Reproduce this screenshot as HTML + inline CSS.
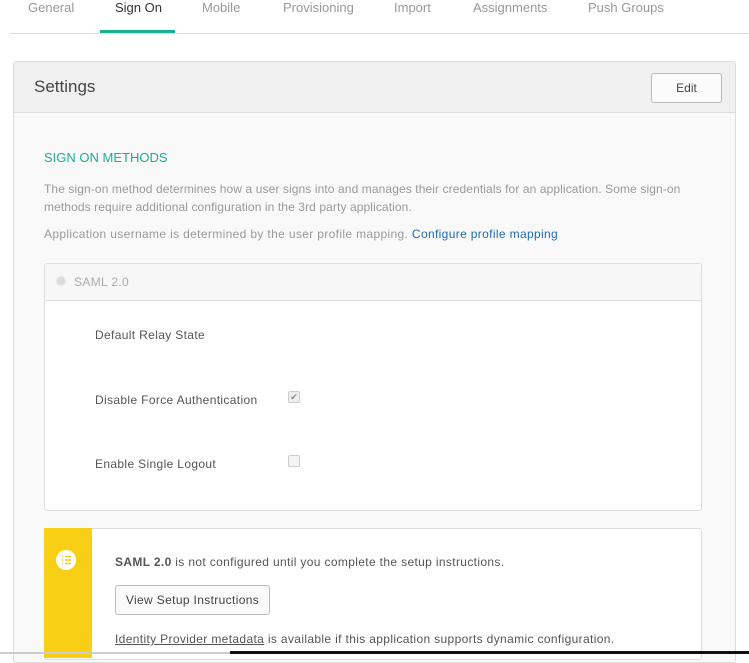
<!DOCTYPE html>
<html><head><style>
body{margin:0;width:749px;height:654px;overflow:hidden;background:#fff;font-family:"Liberation Sans",sans-serif;position:relative;color:#5e5e5e}
.a{position:absolute}
.tab{position:absolute;top:0;font-size:13px;color:#999}
.ls{letter-spacing:0.35px}
</style></head><body>
<div class="tab" style="left:28px">General</div>
<div class="tab" style="left:115px;color:#333">Sign On</div>
<div class="tab" style="left:202px">Mobile</div>
<div class="tab" style="left:283px">Provisioning</div>
<div class="tab" style="left:394px">Import</div>
<div class="tab" style="left:473px">Assignments</div>
<div class="tab" style="left:588px">Push Groups</div>
<div class="a" style="left:100px;top:30px;width:75px;height:3px;background:#1aaf93"></div>
<div class="a" style="left:10px;top:33px;width:739px;height:1px;background:#ddd"></div>

<div class="a" style="left:13px;top:61px;width:721px;height:600px;border:1px solid #ddd;border-radius:3px;background:#f9f9f9"></div>
<div class="a" style="left:14px;top:62px;width:721px;height:50px;background:#f0f0f0;border-bottom:1px solid #ddd"></div>
<div class="a" style="left:34px;top:77px;font-size:17px;color:#444">Settings</div>
<div class="a" style="left:651px;top:73px;width:69px;height:28px;border:1px solid #bbb;border-radius:3px;background:#fbfbfb;font-size:12px;color:#444;text-align:center;line-height:28px">Edit</div>

<div class="a" style="left:44px;top:150px;font-size:13px;color:#1aaf93">SIGN ON METHODS</div>
<div class="a" style="left:44px;top:180px;width:665px;font-size:12px;color:#999;line-height:18px;letter-spacing:0.1px">The sign-on method determines how a user signs into and manages their credentials for an application. Some sign-on methods require additional configuration in the 3rd party application.</div>
<div class="a ls" style="left:44px;top:227px;font-size:12px;color:#999">Application username is determined by the user profile mapping. <span style="color:#1b6db5">Configure profile mapping</span></div>

<div class="a" style="left:44px;top:263px;width:656px;height:246px;border:1px solid #ddd;border-radius:3px;background:#fff"></div>
<div class="a" style="left:45px;top:264px;width:656px;height:36px;background:#f7f7f7;border-bottom:1px solid #ddd"></div>
<div class="a" style="left:56px;top:276px;width:8px;height:8px;border-radius:50%;background:#ddd;border:1px solid #e6e6e6"></div>
<div class="a ls" style="left:74px;top:275px;font-size:12px;color:#aaa">SAML 2.0</div>
<div class="a ls" style="left:95px;top:328px;font-size:12px;color:#555">Default Relay State</div>
<div class="a ls" style="left:95px;top:393px;font-size:12px;color:#555">Disable Force Authentication</div>
<div class="a" style="left:288px;top:391px;width:10px;height:10px;border:1px solid #ccc;border-radius:2px;background:#eee;font-size:9px;line-height:10px;text-align:center;color:#888">✔</div>
<div class="a ls" style="left:95px;top:457px;font-size:12px;color:#555">Enable Single Logout</div>
<div class="a" style="left:288px;top:455px;width:10px;height:10px;border:1px solid #ccc;border-radius:2px;background:#f4f4f4"></div>

<div class="a" style="left:44px;top:528px;width:656px;height:130px;border:1px solid #ddd;border-radius:3px;background:#fff"></div>
<div class="a" style="left:44px;top:528px;width:48px;height:130px;background:#f8cf14"></div>
<svg class="a" style="left:56px;top:550px" width="20" height="20" viewBox="0 0 20 20"><circle cx="10" cy="10" r="10" fill="#fff"/><g stroke="#f8cf14" stroke-width="1.6"><path d="M6 6.5h1M9 6.5h6M6 10h1M9 10h6M6 13.5h1M9 13.5h6"/></g></svg>
<div class="a ls" style="left:115px;top:555px;font-size:12px;color:#555"><b>SAML 2.0</b> is not configured until you complete the setup instructions.</div>
<div class="a ls" style="left:115px;top:585px;width:153px;height:28px;border:1px solid #bbb;border-radius:3px;background:#fafafa;font-size:12px;color:#444;text-align:center;line-height:28px">View Setup Instructions</div>
<div class="a ls" style="left:115px;top:632px;font-size:12px;color:#555"><span style="text-decoration:underline">Identity Provider metadata</span> is available if this application supports dynamic configuration.</div>
<div class="a" style="left:0;top:652px;width:230px;height:2px;background:#ccc"></div>
<div class="a" style="left:230px;top:651px;width:519px;height:3px;background:#111"></div>
</body></html>
